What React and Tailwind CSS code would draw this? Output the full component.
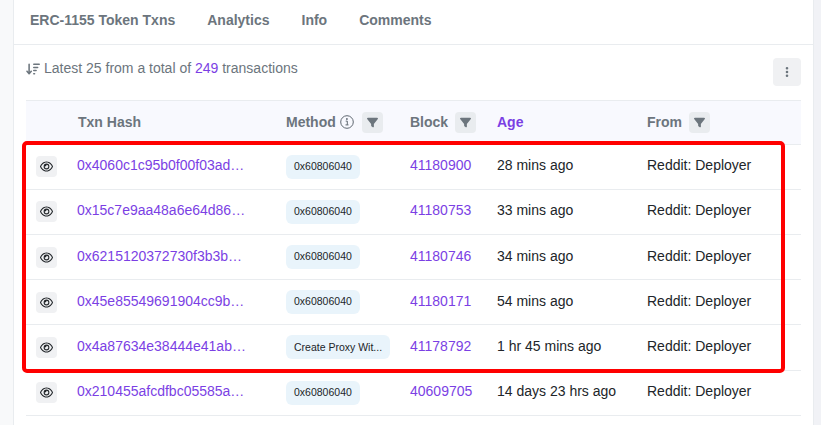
import { FaArrowDownWideShort, FaEllipsisVertical, FaFilter, FaRegEye } from 'react-icons/fa6';

const TABS = ['ERC-1155 Token Txns', 'Analytics', 'Info', 'Comments'];

const ROWS = [
  { hash: '0x4060c1c95b0f00f03ad…', method: '0x60806040', block: '41180900', age: '28 mins ago' },
  { hash: '0x15c7e9aa48a6e64d86…', method: '0x60806040', block: '41180753', age: '33 mins ago' },
  { hash: '0x6215120372730f3b3b…', method: '0x60806040', block: '41180746', age: '34 mins ago' },
  { hash: '0x45e85549691904cc9b…', method: '0x60806040', block: '41180171', age: '54 mins ago' },
  { hash: '0x4a87634e38444e41ab…', method: 'Create Proxy Wit...', block: '41178792', age: '1 hr 45 mins ago' },
  { hash: '0x210455afcdfbc05585a…', method: '0x60806040', block: '40609705', age: '14 days 23 hrs ago' },
];

function FilterButton() {
  return (
    <span className="flex h-[21px] w-[21px] items-center justify-center rounded bg-[#e9ecef] text-[#6c757d]">
      <FaFilter className="text-[11px]" />
    </span>
  );
}

function InfoIcon() {
  return (
    <svg width="14" height="14" viewBox="0 0 14 14" fill="none" className="text-[#5f6871]">
      <circle cx="7" cy="7" r="6.3" stroke="currentColor" strokeWidth="1" />
      <path d="M5.7 6.1h1.6v3.7M5.5 9.9h3" stroke="currentColor" strokeWidth="1" />
      <circle cx="6.9" cy="4" r="0.9" fill="currentColor" />
    </svg>
  );
}

export default function App() {
  return (
    <div className="relative flex h-[425px] w-[821px] overflow-hidden bg-[#f8f9fa] font-['Liberation_Sans',Arial,sans-serif] text-[14px] text-[#212529]">
      <div className="ml-[13px] h-full w-[801px] border-x border-[#e9ecef] bg-white">
        {/* Tabs */}
        <div className="flex h-[45px] items-center gap-[32px] border-b border-[#e9ecef] pl-[16px] pb-[3px] font-bold text-[#6c757d]">
          {TABS.map(t => <span key={t}>{t}</span>)}
        </div>

        {/* Toolbar */}
        <div className="ml-[12px] mr-[12px] flex h-[55px] items-start justify-between pt-[13px]">
          <div className="flex items-center gap-[4px] text-[#6c757d]">
            <FaArrowDownWideShort className="text-[14px]" />
            <span>
              Latest 25 from a total of <span className="text-[#7b3fe4]">249</span> transactions
            </span>
          </div>
          <span className="flex h-[28px] w-[28px] items-center justify-center rounded bg-[#f0f1f3] text-[#6c757d]">
            <FaEllipsisVertical className="text-[12px]" />
          </span>
        </div>

        {/* Table */}
        <div className="ml-[12px] w-[775px]">
          <div className="flex h-[44.6px] items-center border-y border-[#e9ecef] bg-[#f8f9fe] font-bold text-[#6c757d]">
            <div className="w-[52px]" />
            <div className="w-[208px]">Txn Hash</div>
            <div className="flex w-[124px] items-center">
              Method
              <span className="ml-[4px] mr-[8px]"><InfoIcon /></span>
              <FilterButton />
            </div>
            <div className="flex w-[87px] items-center gap-[7px]">
              Block
              <FilterButton />
            </div>
            <div className="w-[150px] text-[#7b3fe4]">Age</div>
            <div className="flex items-center gap-[7px]">
              From
              <FilterButton />
            </div>
          </div>

          {ROWS.map(r => (
            <div key={r.hash} className="flex h-[45.2px] items-center border-b border-[#e9ecef]">
              <div className="w-[51px] pl-[10px]">
                <span className="flex h-[21px] w-[21px] items-center justify-center rounded bg-[#f0f1f3] text-[#212529]">
                  <FaRegEye className="text-[13px]" />
                </span>
              </div>
              <div className="w-[209px] pb-[2px] text-[#7b3fe4]">{r.hash}</div>
              <div className="w-[124px]">
                <span className="inline-flex h-[24px] items-center rounded-md bg-[#e9f4fb] px-[8px] text-[10.5px] text-[#212529]">
                  {r.method}
                </span>
              </div>
              <div className="w-[87px] pb-[2px] text-[#7b3fe4]">{r.block}</div>
              <div className="w-[150px] pb-[2px]">{r.age}</div>
              <div className="pb-[2px]">Reddit: Deployer</div>
            </div>
          ))}
        </div>
      </div>
      <div className="h-full flex-1 bg-[#f1f2f6]" />

      {/* Red highlight drawn over the table */}
      <div className="absolute left-[22px] top-[140.5px] h-[232px] w-[763px] rounded-[5px] border-[4.5px] border-[#ff0000]" />
    </div>
  );
}
